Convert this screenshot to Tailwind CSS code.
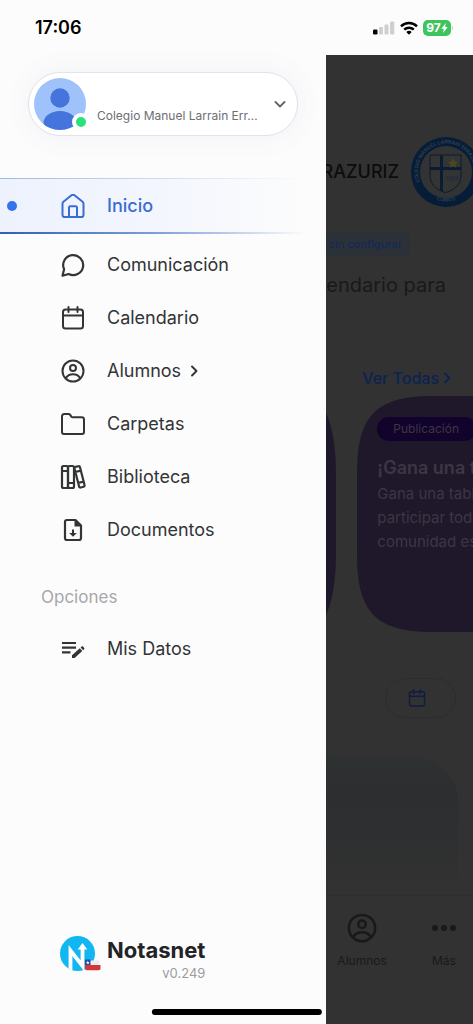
<!DOCTYPE html>
<html lang="es">
<head>
<meta charset="utf-8">
<meta name="viewport" content="width=device-width, initial-scale=1">
<title>Notasnet</title>
<script src="https://cdn.jsdelivr.net/npm/@tailwindcss/browser@4"></script>
</head>
<body class="relative flex min-h-screen flex-col overflow-x-hidden bg-[#fcfcfc] font-['Inter',sans-serif] text-[#333436]">

<svg class="hidden" aria-hidden="true">
  <symbol id="calendar" viewBox="0 0 24 24" fill="none" stroke="currentColor" stroke-width="2" stroke-linejoin="round" stroke-linecap="round"><rect x="2" y="3.500" width="20" height="19" rx="2.500"/><path d="M2 9.500h20M7.500 1v5M16.500 1v5"/></symbol>
  <symbol id="user" viewBox="0 0 24 24" fill="none" stroke="currentColor" stroke-width="2"><circle cx="12" cy="12" r="10.500"/><circle cx="12" cy="9" r="3"/><path d="M4.800 19.200c1.800-3 4.300-3.900 7.200-3.900s5.400.9 7.200 3.900"/></symbol>
  <symbol id="chevron" viewBox="0 0 12 12" fill="none" stroke="currentColor" stroke-width="1.900" stroke-linecap="round" stroke-linejoin="round"><path d="M4 1.500 8.500 6 4 10.500"/></symbol>
</svg>

<header class="flex h-[55px] shrink-0 items-center justify-between pr-5 pl-[35px] text-black">
  <time class="text-lg font-semibold">17:06</time>
  <div class="flex items-center gap-[5px]">
    <svg class="h-[14px] w-[22px]" viewBox="0 0 22 14" aria-label="Señal"><rect x="0" y="8.500" width="4.500" height="5" rx="1.200"/><g fill="#cfcfcf"><rect x="6" y="6" width="4" height="7.500" rx="1"/><rect x="11.500" y="3.500" width="4" height="10" rx="1"/><rect x="17" y="0.500" width="4.300" height="13" rx="1"/></g></svg>
    <svg class="h-[14px] w-[18px]" viewBox="0 0 18 14" fill="none" stroke="#000" stroke-width="2.500" aria-label="Wi-Fi"><path d="M1 5.300a11.500 11.500 0 0 1 16 0M4.200 8.700a7 7 0 0 1 9.600 0"/><path d="M9 13.800 6.300 11a4 4 0 0 1 5.400 0z" fill="#000" stroke="none"/></svg>
    <div class="flex items-center gap-px">
      <div class="flex h-4 w-7 items-center justify-center rounded-[5px] bg-[#3ec45c] text-xs font-bold text-white">97<svg class="h-[10px] w-[7px]" viewBox="0 0 7 10" fill="#fff" aria-hidden="true"><path d="M4.800 0 .3 5.800h2.500L2 10l4.700-5.900H4.100z"/></svg></div>
      <div class="h-1 w-px bg-[#b5dfbf]"></div>
    </div>
  </div>
</header>

<div class="flex grow">
  <aside class="flex w-[69%] shrink-0 flex-col">
    <button class="mx-7 mt-[17px] flex h-16 items-center rounded-full border border-[#e1e2ea] bg-white pr-[11px] pl-[5px] text-left shadow-[0_0_28px_rgba(80,100,170,0.07)]">
      <span class="relative shrink-0">
        <svg class="size-[52px]" viewBox="0 0 52 52" aria-hidden="true"><defs><clipPath id="face"><circle cx="26" cy="26" r="26"/></clipPath></defs><g clip-path="url(#face)"><path fill="#9fc2fb" d="M0 0h52v52H0z"/><circle cx="26" cy="20" r="9.700" fill="#4574dc"/><ellipse cx="26" cy="45" rx="16.500" ry="12" fill="#4574dc"/></g></svg>
        <span class="absolute -right-[4px] -bottom-px size-[18px] rounded-full border-4 border-white bg-[#2ae27a]"></span>
      </span>
      <span class="mt-6 ml-[11px] grow truncate text-xs text-[#6d6e72]">Colegio Manuel Larrain Err…</span>
      <svg class="size-3 shrink-0 rotate-90 text-[#66676b]"><use href="#chevron"/></svg>
    </button>

    <nav class="mt-[42px] text-lg" aria-label="Principal">
      <a href="#" aria-current="page" class="mr-5 flex h-14 flex-col text-[#3a6cd6]">
        <span class="h-px bg-linear-to-r from-[#9cb8e8] to-transparent"></span>
        <span class="flex grow items-center bg-linear-to-r from-[#edf2fd] via-[#f3f6fe] to-transparent pl-[7px]">
          <span class="mr-11 size-[10px] rounded-full bg-[#3672ee]"></span>
          <svg class="mr-[22px] size-6" viewBox="0 0 24 24" fill="none" stroke="currentColor" stroke-width="2" stroke-linejoin="round" aria-hidden="true"><path d="M1.500 9.700c0-.8.300-1.400.9-1.900L10.500 1.200c.9-.7 2.100-.7 3 0l8.100 6.600c.6.500.9 1.100.9 1.900V21c0 1.300-.8 2.100-2.100 2.100H3.600c-1.300 0-2.100-.8-2.100-2.100z"/><path d="M8 23V13.500c0-.8.500-1.300 1.300-1.300h5.400c.8 0 1.300.5 1.300 1.300V23"/></svg>
          <span class="font-medium">Inicio</span>
        </span>
        <span class="h-[2px] bg-linear-to-r from-[#2d60b8] via-[#7d9dd6] to-transparent"></span>
      </a>
      <div class="mt-1 pl-[61px]">
        <a href="#" class="flex h-[53px] items-center gap-[22px]">
          <svg class="size-6" viewBox="0 0 24 24" fill="none" stroke="currentColor" stroke-width="2.200" stroke-linejoin="round" aria-hidden="true"><path d="M1.500 22.800l1.600-6.500A10 10 0 1 1 7.600 21z"/></svg>Comunicación</a>
        <a href="#" class="flex h-[53px] items-center gap-[22px]"><svg class="size-6"><use href="#calendar"/></svg>Calendario</a>
        <a href="#" class="flex h-[53px] items-center gap-[22px]"><svg class="size-6"><use href="#user"/></svg><span class="flex items-center gap-[7px]">Alumnos<svg class="size-3"><use href="#chevron"/></svg></span></a>
        <a href="#" class="flex h-[53px] items-center gap-[22px]">
          <svg class="size-6" viewBox="0 0 24 24" fill="none" stroke="currentColor" stroke-width="2" stroke-linejoin="round" aria-hidden="true"><path d="M1 4.500C1 3 1.800 2 3.300 2h4.200c.8 0 1.300.3 1.700.9l1.100 1.700c.4.500.8.700 1.400.7h9c1.400 0 2.300.9 2.300 2.300V20c0 1.300-.8 2-2 2H3c-1.200 0-2-.7-2-2z"/></svg>Carpetas</a>
        <a href="#" class="flex h-[53px] items-center gap-[22px]">
          <svg class="size-6 overflow-visible" viewBox="0 0 24 24" fill="none" stroke="currentColor" stroke-width="2.200" stroke-linejoin="round" aria-hidden="true"><rect x="1" y="1" width="6" height="22" rx="1.500"/><rect x="7" y="1" width="6" height="22" rx="1.500"/><path d="M1 6h6M7 18h6M13.500 3.600c-.2-.9.200-1.500 1-1.700l2.900-.7c.8-.2 1.400.2 1.600 1l4.500 17.900c.2.900-.1 1.500-1 1.700l-2.800.7c-.8.200-1.400-.1-1.600-1zM14.200 7l5.700-1.400M16.900 18l5.700-1.400"/></svg>Biblioteca</a>
        <a href="#" class="flex h-[53px] items-center gap-[22px]">
          <svg class="size-6" viewBox="0 0 24 24" fill="none" stroke="currentColor" stroke-width="2.200" stroke-linejoin="round" aria-hidden="true"><path d="M6 2h8.500L20 7.500V20c0 1.200-.8 2-2 2H6c-1.200 0-2-.8-2-2V4c0-1.200.8-2 2-2z"/><path fill="currentColor" stroke="none" d="M13.500 2 20.500 8.500h-7zM11 11.500h2V15h2.800L12 18.800 8.200 15H11z"/></svg>Documentos</a>
      </div>
      <h2 class="mt-7 pl-[41px] text-[17px] leading-[26px] text-[#a6a7aa]">Opciones</h2>
      <div class="mt-3 pl-[61px]">
        <a href="#" class="flex h-[53px] items-center gap-[22px]">
          <svg class="size-6" viewBox="0 0 24 24" fill="none" stroke="currentColor" aria-hidden="true"><path stroke-width="2.200" d="M1 6h14M1 10.700h14M1 15.400h8.500"/><path fill="currentColor" stroke="none" d="m11 18.300 7.800-7 2.500 2.700-7.700 6.900H11zM19.600 10.500l1-.9c.5-.4 1-.4 1.400 0l1.200 1.400c.4.500.4.900-.1 1.300l-1 .9z"/></svg>Mis Datos</a>
      </div>
    </nav>

    <footer class="mt-auto mb-[42px] flex items-start gap-[11px] pl-[60px]">
      <svg class="h-[38px] w-9 overflow-visible" viewBox="0 0 36 38" role="img" aria-label="Logo Notasnet"><defs><clipPath id="disc"><circle cx="17.500" cy="17.500" r="17.500"/></clipPath></defs><circle cx="17.500" cy="17.500" r="17.500" fill="#12b7f2"/><g clip-path="url(#disc)"><path d="M10.500 37V14.500l12 15.500V12" fill="none" stroke="#fff" stroke-width="3.800" stroke-linejoin="miter"/><path d="M17.700 13.500 22.500 7l4.800 6.500z" fill="#fff"/></g><path d="M25 24.500h14.500v5H25z" fill="#ececef"/><path d="M25 23.500h5.500v6H25z" fill="#2946a0"/><path d="m27.800 24.500.5 1.400h1.400l-1.100.9.400 1.400-1.200-.8-1.200.8.400-1.400-1.100-.9h1.400z" fill="#fff"/><path d="M25 29h15.500v3.500c0 1-.7 1.700-1.700 1.700h-12c-1.100 0-1.800-.7-1.800-1.700z" fill="#d0383c"/></svg>
      <div class="text-right">
        <p class="text-[22px] leading-[28px] font-bold text-[#222326]">Notasnet</p>
        <p class="text-[13px] leading-[18px] text-[#9b9ca0]">v0.249</p>
      </div>
    </footer>
  </aside>

  <main class="flex min-w-0 grow flex-col overflow-hidden bg-[#323232]">
    <div class="mt-[82px] -mr-[8px] flex h-[70px] items-center justify-end gap-3">
      <h1 class="text-lg font-medium text-[#0c0c0c]">RAZURIZ</h1>
      <svg class="size-[70px] shrink-0" viewBox="0 0 70 70" role="img" aria-label="Colegio Manuel Larrain Errazuriz, Curicó, 1984"><defs><path id="ringTop" d="M9 45A28 28 0 1 1 61 45"/><path id="ringBottom" d="M15 57A30 30 0 0 0 55 57"/></defs><circle cx="35" cy="35" r="35" fill="#071c36"/><circle cx="35" cy="35" r="26" fill="#323334"/><g fill="#32404f" font-family="Inter" font-weight="600" font-size="5"><text><textPath href="#ringTop">COLEGIO MANUEL LARRAIN ERRAZURIZ</textPath></text><text text-anchor="middle"><textPath href="#ringBottom" startOffset="50%">CURICO</textPath></text></g><path d="M19 18h31V38c0 9-6 15-15.500 17.500C25 53 19 47 19 38z" fill="#333434" stroke="#111b28"/><path d="M30.500 18.500V54M19 31.500h31" stroke="#0a1c34" stroke-width="3"/><path d="m42 21 1.500 3.500 3.700.3-2.800 2.500.9 3.700-3.300-2-3.300 2 .9-3.700-2.800-2.500 3.700-.3z" fill="#4c481e"/><text x="35" y="44" font-family="Inter" font-size="5.500" fill="#1b2a3b">1984</text></svg>
    </div>
    <div class="mt-[25px] mr-[63px] flex justify-end">
      <span class="flex h-6 grow items-center justify-end rounded-r bg-[#2c3138] pr-2 text-[11px] font-medium whitespace-nowrap text-[#142958]">sin configurar</span>
    </div>
    <p class="mt-[15px] mr-[27px] flex justify-end text-xl whitespace-nowrap text-[#191919]">endario para</p>
    <a href="#" class="mt-[65px] mr-5 flex items-center justify-end gap-[2px] text-base leading-7 font-medium whitespace-nowrap text-[#0a2353]">Ver Todas<svg class="size-3"><use href="#chevron"/></svg></a>
    <div class="mt-1 flex h-[236px] gap-[21px]">
      <div class="w-[10px] shrink-0 overflow-hidden"><svg class="h-full w-full" viewBox="0 0 10 236" preserveAspectRatio="none" aria-hidden="true"><path fill="#1f182a" d="M0 17C6 30 10 50 10 78v80c0 28-4 48-10 61z"/></svg></div>
      <article class="relative grow overflow-hidden text-[#3b3744]">
        <svg class="absolute inset-0 h-full w-[300px]" viewBox="0 0 300 236" preserveAspectRatio="none" aria-hidden="true"><path fill="#1f182a" d="M0 78C0 20 18 0 76 0h148c58 0 76 20 76 78v80c0 58-18 78-76 78H76C18 236 0 216 0 158z"/></svg>
        <div class="relative w-[240px] pt-[21px] pl-5">
          <span class="flex h-6 w-[100px] items-center rounded-full bg-[#12032c] pl-4 text-xs">Publicación</span>
          <h3 class="mt-[15px] text-lg leading-6 font-semibold whitespace-nowrap">¡Gana una tablet!</h3>
          <p class="mt-[2px] text-[15px] leading-6 whitespace-nowrap">Gana una tablet<br>participar toda<br>comunidad escolar</p>
        </div>
      </article>
    </div>
    <div class="mt-[46px] mr-[17px] flex justify-end">
      <button aria-label="Abrir calendario" class="flex h-10 w-[71px] items-center justify-center rounded-full border border-[#2c2d30] pr-2 text-[#101d40]"><svg class="size-[18px]"><use href="#calendar"/></svg></button>
    </div>
    <div class="mt-[39px] mr-[15px] h-[124px] rounded-tr-[44px] bg-linear-to-b from-[#2e3132] via-[#2c2e30] via-30% to-[#313131]"></div>
    <nav class="mt-auto flex h-[129px] justify-between border-t border-[#2e2e2e] pt-[17px] pr-[17px] pl-[11px] text-xs text-[#191919]" aria-label="Inferior">
      <a href="#" class="flex flex-col items-center gap-[10px]"><svg class="size-[30px]"><use href="#user"/></svg>Alumnos</a>
      <a href="#" class="flex flex-col items-center gap-[10px]"><svg class="h-[30px] w-6" viewBox="0 0 24 30" fill="currentColor" aria-hidden="true"><circle cx="3" cy="15" r="3"/><circle cx="12" cy="15" r="3"/><circle cx="21" cy="15" r="3"/></svg>Más</a>
    </nav>
  </main>
</div>

<div class="absolute bottom-[9px] left-1/2 h-[6px] w-[36%] -translate-x-1/2 rounded-full bg-black" aria-hidden="true"></div>
</body>
</html>
